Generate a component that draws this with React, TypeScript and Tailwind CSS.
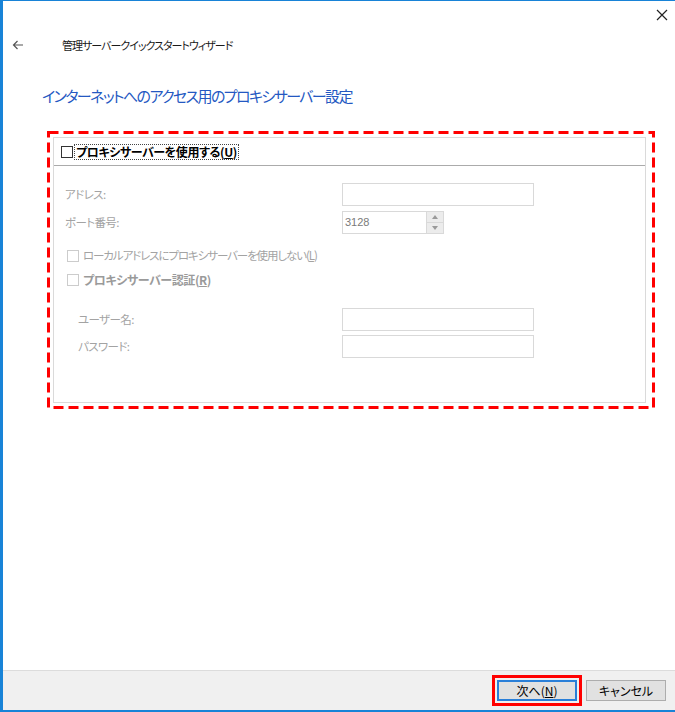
import React from "react";

const F = "font-['Noto_Sans_CJK_JP','Noto_Sans_CJK_SC',sans-serif] [font-feature-settings:'palt']";

function Label({ children, indent }: { children: React.ReactNode; indent?: boolean }) {
  return (
    <div className={`w-[277px] shrink-0 text-[11.5px] tracking-[-0.6px] text-[#a3a3a3] leading-none ${indent ? "pl-[13px]" : ""}`}>
      {children}
    </div>
  );
}

function TextBox() {
  return <div className="w-[192px] h-[23px] border border-[#d9d9d9] bg-white" />;
}

function DisabledCheck() {
  return <div className="w-[12px] h-[12px] border border-[#cccccc] bg-white shrink-0" />;
}

export default function App() {
  return (
    <div
      className={`${F} w-[675px] h-[712px] bg-white border-t border-l-[3px] border-b-2 border-[#1883d7] flex flex-col overflow-hidden text-black`}
    >
      {/* close row */}
      <div className="h-[27px] flex items-center justify-end pr-[7px]">
        <svg width="12" height="12" viewBox="0 0 12 12">
          <path d="M1 1 L11 11 M11 1 L1 11" stroke="#222" strokeWidth="1.2" fill="none" />
        </svg>
      </div>

      {/* title row */}
      <div className="h-[34px] flex items-center pl-[9px]">
        <svg width="12" height="10" viewBox="0 0 12 10">
          <path d="M11 5 H1.5 M5.5 1 L1.5 5 L5.5 9" stroke="#555" strokeWidth="1.2" fill="none" />
        </svg>
        <span className="ml-[38px] text-[11px] tracking-[-1px] text-[#1a1a1a] leading-none">管理サーバークイックスタートウィザード</span>
      </div>

      {/* heading */}
      <div className="mt-[22px] pl-[39px] h-[22px] flex items-center text-[15px] tracking-[-1.6px] text-[#2458c2] leading-none">
        インターネットへのアクセス用のプロキシサーバー設定
      </div>

      {/* red annotated group */}
      <div className="relative mt-[25px] ml-[44px] w-[608px] h-[278px] pt-[6px] pb-[6px] pl-[6px] pr-[9px] flex">
        <svg className="absolute inset-0 pointer-events-none" width="608" height="278" viewBox="0 0 608 278">
          <rect x="1.5" y="1.5" width="605" height="275" fill="none" stroke="#ff0000" strokeWidth="3" strokeDasharray="10 5" />
        </svg>
        <div className="flex-1 border border-[#dadada] flex flex-col">
          {/* header */}
          <div className="h-[28px] border-b border-[#ababab] flex items-center pl-[7px]">
            <div className="w-[12px] h-[12px] border border-[#333] bg-white shrink-0" />
            <div className="ml-[1px] border border-dotted border-[#444] px-[1px] h-[16px] flex items-center text-[12px] tracking-[-0.4px] font-bold leading-none">
              プロキシサーバーを使用する(<span className="underline">U</span>)
            </div>
          </div>

          {/* body */}
          <div className="pl-[11px] flex flex-col">
            <div className="mt-[17px] flex items-center h-[23px]">
              <Label>アドレス:</Label>
              <TextBox />
            </div>
            <div className="mt-[5px] flex items-center h-[23px]">
              <Label>ポート番号:</Label>
              <div className="w-[102px] h-[23px] border border-[#d9d9d9] bg-white flex">
                <div className="flex-1 flex items-center pl-[2px] text-[11px] text-[#7a7a7a] font-['Liberation_Sans','Noto_Sans_CJK_JP',sans-serif]">
                  3128
                </div>
                <div className="w-[17px] border-l border-[#d9d9d9] bg-[#ececec] flex flex-col">
                  <div className="flex-1 flex items-center justify-center border-b border-[#d9d9d9]">
                    <svg width="6" height="4" viewBox="0 0 6 4"><path d="M0 4 L3 0 L6 4 Z" fill="#9a9a9a" /></svg>
                  </div>
                  <div className="flex-1 flex items-center justify-center">
                    <svg width="6" height="4" viewBox="0 0 6 4"><path d="M0 0 L6 0 L3 4 Z" fill="#9a9a9a" /></svg>
                  </div>
                </div>
              </div>
            </div>

            <div className="mt-[14px] flex items-center h-[16px] pl-[2px]">
              <DisabledCheck />
              <span className="ml-[4px] text-[11.5px] tracking-[-1.1px] text-[#a3a3a3] leading-none">
                ローカルアドレスにプロキシサーバーを使用しない(<span className="underline">L</span>)
              </span>
            </div>

            <div className="mt-[8px] flex items-center h-[16px] pl-[2px]">
              <DisabledCheck />
              <span className="ml-[4px] text-[12px] tracking-[-0.4px] font-bold text-[#9a9a9a] leading-none">
                プロキシサーバー認証(<span className="underline">R</span>)
              </span>
            </div>

            <div className="mt-[20px] flex items-center h-[23px]">
              <Label indent>ユーザー名:</Label>
              <TextBox />
            </div>
            <div className="mt-[4px] flex items-center h-[23px]">
              <Label indent>パスワード:</Label>
              <TextBox />
            </div>
          </div>
        </div>
      </div>

      <div className="flex-1" />

      {/* footer */}
      <div className="h-[40px] border-t border-[#dcdcdc] bg-[#f0f0f0] flex items-center justify-end pr-[9px]">
        <div className="border-[3px] border-[#ff0000] p-[2px]">
          <div className="w-[80px] h-[21px] border-2 border-[#2a7fd8] bg-[#e1e1e1] flex items-center justify-center text-[12px] leading-none">
            次へ(<span className="underline">N</span>)
          </div>
        </div>
        <div className="ml-[4px] w-[80px] h-[21px] border border-[#adadad] bg-[#e1e1e1] flex items-center justify-center text-[12px] leading-none">
          キャンセル
        </div>
      </div>
    </div>
  );
}
